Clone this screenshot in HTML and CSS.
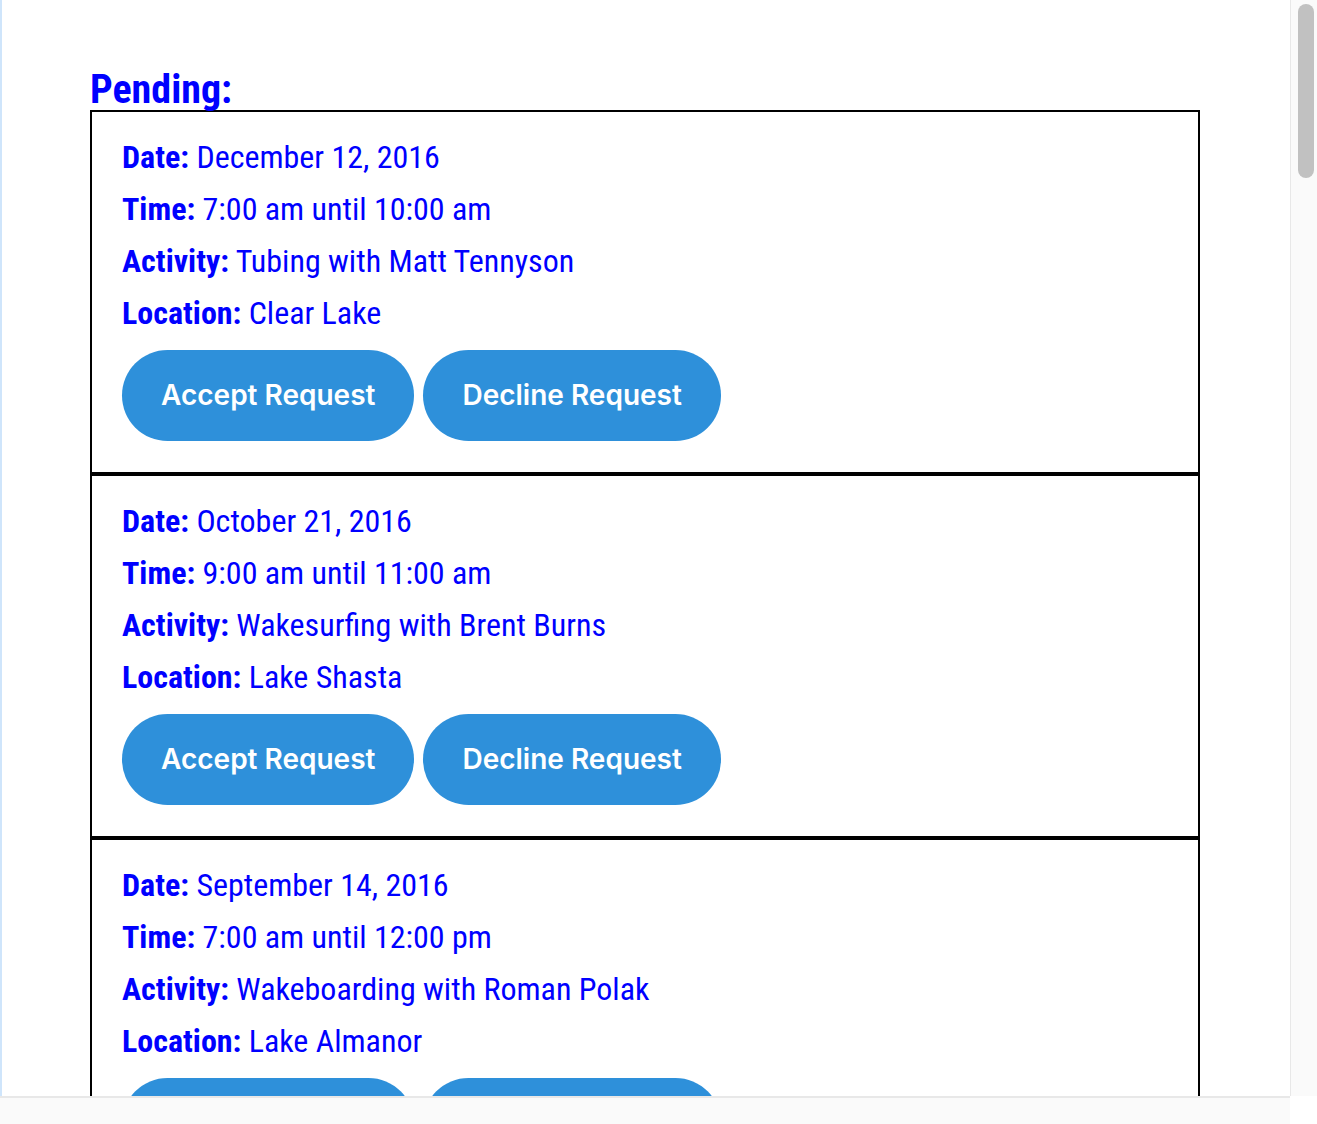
FILE: index.html
```html
<!DOCTYPE html>
<html>
<head>
<meta charset="utf-8">
<link rel="stylesheet" href="styles.css">
</head>
<body>
<div class="screen">
  <div class="viewport">
    <h2 class="heading">Pending:</h2>
    <div class="list">
      <div class="card">
        <p class="row"><b>Date:</b> December 12, 2016</p>
        <p class="row"><b>Time:</b> 7:00 am until 10:00 am</p>
        <p class="row"><b>Activity:</b> Tubing with Matt Tennyson</p>
        <p class="row"><b>Location:</b> Clear Lake</p>
        <div class="actions">
          <button class="btn">Accept Request</button>
          <button class="btn">Decline Request</button>
        </div>
      </div>
      <div class="card">
        <p class="row"><b>Date:</b> October 21, 2016</p>
        <p class="row"><b>Time:</b> 9:00 am until 11:00 am</p>
        <p class="row"><b>Activity:</b> Wakesurfing with Brent Burns</p>
        <p class="row"><b>Location:</b> Lake Shasta</p>
        <div class="actions">
          <button class="btn">Accept Request</button>
          <button class="btn">Decline Request</button>
        </div>
      </div>
      <div class="card">
        <p class="row"><b>Date:</b> September 14, 2016</p>
        <p class="row"><b>Time:</b> 7:00 am until 12:00 pm</p>
        <p class="row"><b>Activity:</b> Wakeboarding with Roman Polak</p>
        <p class="row"><b>Location:</b> Lake Almanor</p>
        <div class="actions">
          <button class="btn">Accept Request</button>
          <button class="btn">Decline Request</button>
        </div>
      </div>
    </div>
  </div>
  <div class="vbar"><div class="vthumb"></div></div>
  <div class="hbar"></div>
  <div class="corner"></div>
</div>
</body>
</html>
```
FILE: styles.css
```css
html, body {
  margin: 0;
  padding: 0;
  background: #ffffff;
}
.screen {
  display: grid;
  grid-template-columns: 1290px 27px;
  grid-template-rows: 1096px 28px;
  width: 1317px;
  height: 1124px;
  overflow: hidden;
}
.viewport {
  overflow: hidden;
  border-left: 2px solid #cfe5fb;
  padding-left: 88px;
  font-family: Roboto, "Liberation Sans", sans-serif;
  font-stretch: condensed;
  color: #0000ff;
}
.heading {
  margin: 0;
  padding-top: 68px;
  font-size: 40px;
  line-height: 44px;
  font-weight: 700;
  height: 42px;
}
.list {
  width: 1110px;
}
.card {
  border: 2px solid #000000;
  padding: 19px 30px 31px 30px;
}
.row {
  margin: 0;
  font-size: 32px;
  line-height: 52px;
  font-weight: 400;
}
.row b {
  font-weight: 700;
}
.actions {
  display: flex;
  gap: 9px;
  margin-top: 11px;
}
.btn {
  font-family: Inter, "Noto Sans", sans-serif;
  font-size: 28px;
  font-weight: 600;
  line-height: 31px;
  color: #ffffff;
  background: #2e90da;
  border: none;
  border-radius: 46px;
  padding: 30px 39px;
  margin: 0;
}
.vbar {
  background: #fafafa;
  border-left: 1px solid #e8e8e8;
  padding: 4px 3px 0 7px;
}
.vthumb {
  width: 16px;
  height: 174px;
  background: #c1c1c1;
  border-radius: 8px;
}
.hbar {
  background: #fafafa;
  border-top: 2px solid #e8e8e8;
}
.corner {
  background: #ffffff;
}
```
